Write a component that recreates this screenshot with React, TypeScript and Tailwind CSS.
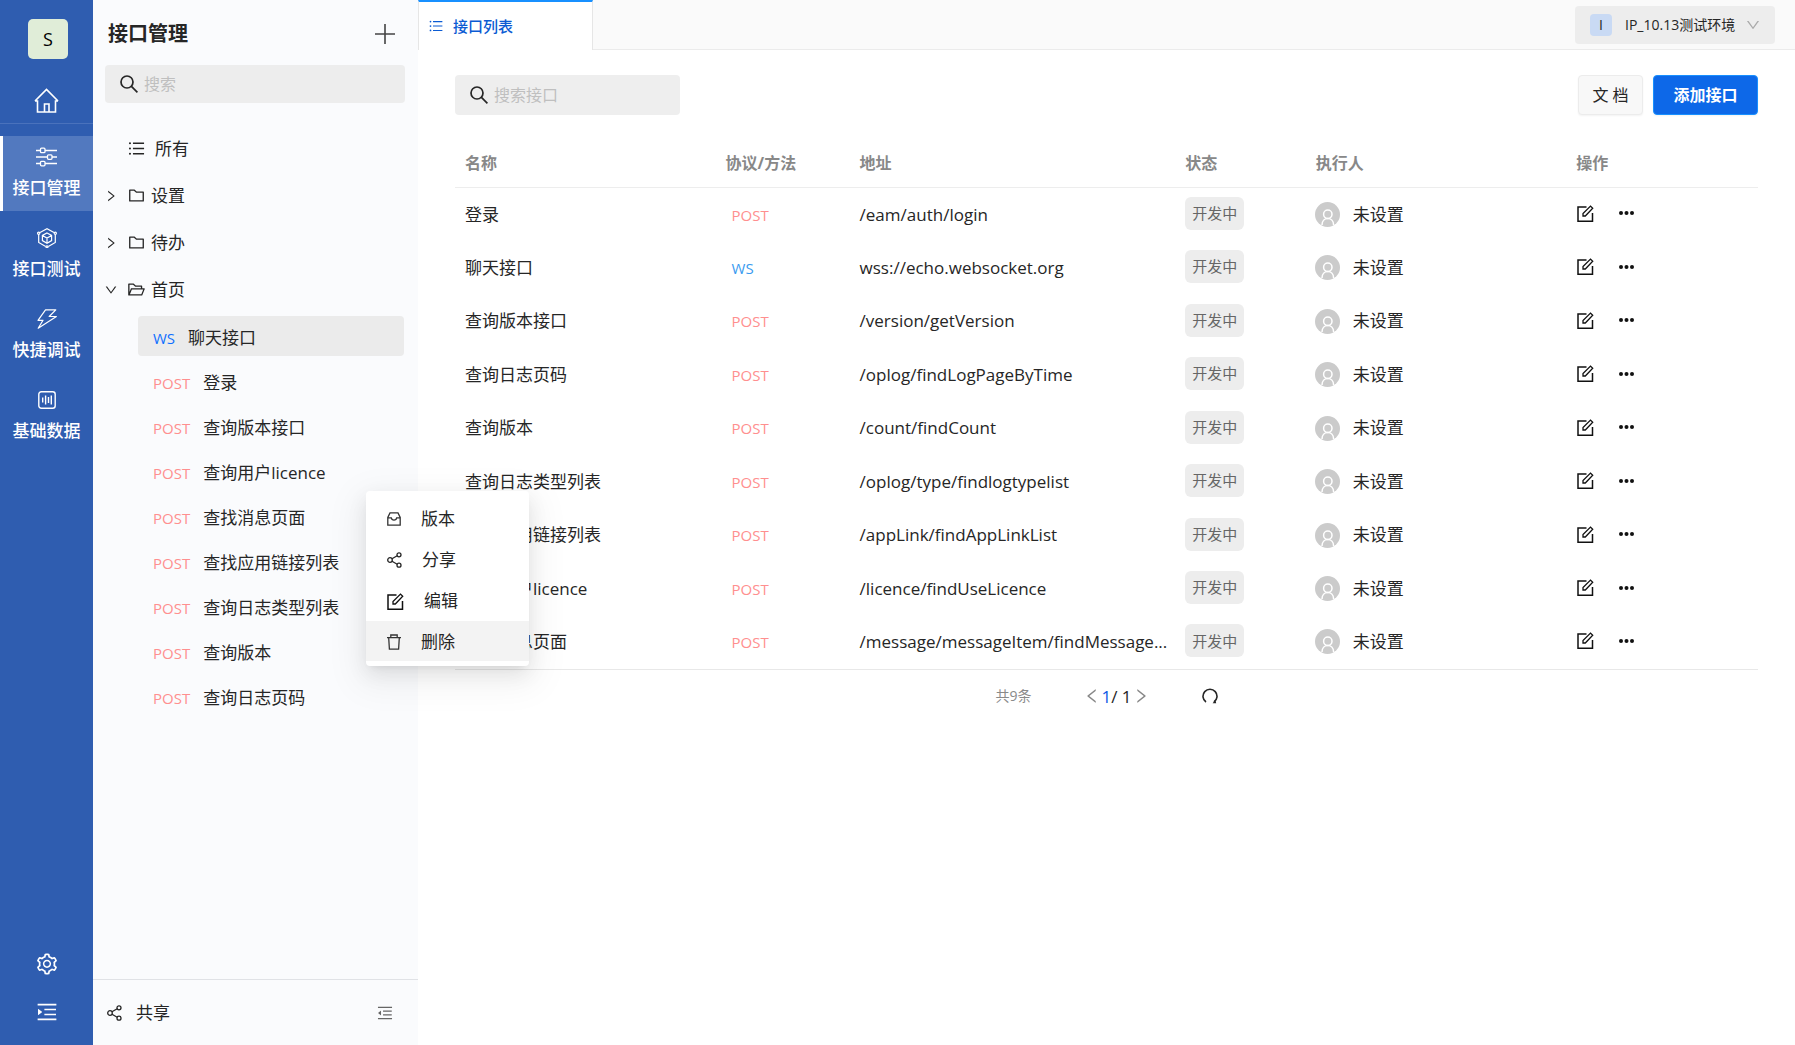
import type { ReactNode } from 'react';
import {
    AiOutlineDown,
    AiOutlineFolder,
    AiOutlineFolderOpen,
    AiOutlineLeft,
    AiOutlineMenuFold,
    AiOutlineMenuUnfold,
    AiOutlineRight,
    AiOutlineSetting,
    AiOutlineUnorderedList,
} from 'react-icons/ai';

type Method = 'POST' | 'WS';

const tree: { method: Method; name: string }[] = [
    { method: 'WS', name: '聊天接口' },
    { method: 'POST', name: '登录' },
    { method: 'POST', name: '查询版本接口' },
    { method: 'POST', name: '查询用户licence' },
    { method: 'POST', name: '查找消息页面' },
    { method: 'POST', name: '查找应用链接列表' },
    { method: 'POST', name: '查询日志类型列表' },
    { method: 'POST', name: '查询版本' },
    { method: 'POST', name: '查询日志页码' },
];

const rows: { name: string; method: Method; path: string }[] = [
    { name: '登录', method: 'POST', path: '/eam/auth/login' },
    { name: '聊天接口', method: 'WS', path: 'wss://echo.websocket.org' },
    { name: '查询版本接口', method: 'POST', path: '/version/getVersion' },
    { name: '查询日志页码', method: 'POST', path: '/oplog/findLogPageByTime' },
    { name: '查询版本', method: 'POST', path: '/count/findCount' },
    { name: '查询日志类型列表', method: 'POST', path: '/oplog/type/findlogtypelist' },
    { name: '查找应用链接列表', method: 'POST', path: '/appLink/findAppLinkList' },
    { name: '查询用户licence', method: 'POST', path: '/licence/findUseLicence' },
    { name: '查找消息页面', method: 'POST', path: '/message/messageItem/findMessage...' },
];

function HomeIcon() {
    return (
        <svg width="25" height="25" viewBox="0 0 25 25" fill="none" stroke="currentColor" strokeWidth="1.6">
            <path d="M1 13 12.5 1.5 24 13M1 13h2.5v11h18V13H24M10.5 24v-8h4.5v8" />
        </svg>
    );
}

function SlidersIcon() {
    return (
        <svg width="21" height="20" viewBox="0 0 21 20" fill="none" stroke="currentColor" strokeWidth="1.3">
            <path d="M0 3.5h4.5M9 3.5h12M0 10h11.5M16 10h5M0 16.5h4.5M9 16.5h12" />
            <rect x="4.5" y="1.2" width="4.5" height="4.5" rx="1" />
            <rect x="11.5" y="7.8" width="4.5" height="4.5" rx="1" />
            <rect x="4.5" y="14.3" width="4.5" height="4.5" rx="1" />
        </svg>
    );
}

function CubeIcon() {
    return (
        <svg width="20" height="20" viewBox="0 0 20 20" fill="none" stroke="currentColor" strokeWidth="1.2">
            <path d="M3 4.5 10 .8l7 3.7M1.7 6.8v7.6l7 4.2M18.3 6.8v7.6l-7 4.2" />
            <circle cx="1.7" cy="5.3" r="1.1" />
            <circle cx="18.3" cy="5.3" r="1.1" />
            <circle cx="10" cy="18.8" r="1" />
            <path d="m10 5 4.6 2.4v5.2L10 15.2l-4.6-2.6V7.4zM5.4 7.4 10 10l4.6-2.6M10 10v5.2" />
        </svg>
    );
}

function BoltIcon() {
    return (
        <svg width="20" height="20" viewBox="0 0 20 20" fill="none" stroke="currentColor" strokeWidth="1.2" strokeLinejoin="round">
            <path d="M8.5.8h10.3L12.2 7.5h7.2L1.2 19.2 6 11.3H1z" />
        </svg>
    );
}

function DataIcon() {
    return (
        <svg width="18" height="18" viewBox="0 0 18 18" fill="none" stroke="currentColor" strokeWidth="1.4">
            <rect x=".8" y=".8" width="16.4" height="16.4" rx="2.5" />
            <path d="M4.7 6.5v5M7.6 4.5v9M10.5 6v6M13.3 4.5v9" />
        </svg>
    );
}

function SearchIcon() {
    return (
        <svg className="shrink-0" width="18" height="18" viewBox="0 0 18 18" fill="none" stroke="#262626" strokeWidth="1.7">
            <circle cx="7" cy="7" r="6" />
            <path d="m11.2 11.2 6.2 6.2" />
        </svg>
    );
}

function PlusIcon() {
    return (
        <svg width="20" height="20" viewBox="0 0 20 20" stroke="#444" strokeWidth="1.6">
            <path d="M10 0v20M0 10h20" />
        </svg>
    );
}

function ShareIcon() {
    return (
        <svg width="15" height="16" viewBox="0 0 15 16" fill="none" stroke="currentColor" strokeWidth="1.3">
            <circle cx="3" cy="8" r="2.3" />
            <circle cx="12" cy="2.8" r="2" />
            <circle cx="12" cy="13.2" r="2" />
            <path d="m5 6.8 5.2-3M5 9.2l5.2 3" />
        </svg>
    );
}

function EditIcon() {
    return (
        <svg width="17" height="17" viewBox="0 0 17 17" fill="none" stroke="#111" strokeWidth="1.5">
            <path d="M9.5 2H1v14.2h14.5V8" />
            <path d="M6 11V8.6L13.5 1.1l2.2 2.2L8.3 11z" strokeWidth="1.3" />
        </svg>
    );
}

function VersionIcon() {
    return (
        <svg width="14" height="14" viewBox="0 0 14 14" fill="none" stroke="#333" strokeWidth="1.3">
            <path d="M3 .9h8l2.2 4.6v7.6H.8V5.5zM.8 5.9h3.5c.3 1.5 1.3 2.2 2.7 2.2s2.4-.7 2.7-2.2h3.5" />
        </svg>
    );
}

function TrashIcon() {
    return (
        <svg width="14" height="16" viewBox="0 0 14 16" fill="none" stroke="#333" strokeWidth="1.3">
            <path d="M0 3.7h14M3.800 3.500V1h6.400v2.500M1.700 3.800l.7 11.400h9.200l.7-11.400" />
        </svg>
    );
}

function ReloadIcon() {
    return (
        <svg width="16" height="16" viewBox="0 0 16 16" fill="none" stroke="#262626" strokeWidth="1.6">
            <path d="M4 14A7 7 0 1 1 12 14" />
            <path d="M10.600 15.200h3.600l-.9-3.200z" fill="#262626" stroke="none" />
        </svg>
    );
}

function UserAvatar() {
    return (
        <svg className="shrink-0" width="25" height="25" viewBox="0 0 25 25" fill="none">
            <circle cx="12.5" cy="12.5" r="12.5" fill="#cbcbcb" />
            <g stroke="#fff" strokeWidth="1.5">
                <circle cx="12.8" cy="12.3" r="4.2" />
                <path d="M7 23c0-4 2.6-6.5 5.8-6.5s5.8 2.500 5.800 6.500" />
            </g>
        </svg>
    );
}

function MethodLabel({ method, active }: { method: Method; active?: boolean }) {
    if (method === 'WS') {
        return <span className={active ? 'text-[15px] font-medium text-[#1070ff]' : 'text-[15px] font-medium text-[#3a9bf0]'}>WS</span>;
    }
    return <span className="text-[15px] text-[#ff8f8f]">POST</span>;
}

function RailItem({ icon, label, active }: { icon: ReactNode; label: string; active?: boolean }) {
    return (
        <button
            className={`flex h-[75px] w-full flex-col items-center justify-center gap-[9px] border-l-[3px] pr-[3px] ${
                active ? 'border-white bg-[#5279bf]' : 'border-transparent'
            }`}
        >
            <span className="flex h-5 items-center">{icon}</span>
            <span className="font-medium leading-6">{label}</span>
        </button>
    );
}

function Rail() {
    return (
        <nav className="flex w-[93px] shrink-0 flex-col items-center bg-[#2f5db0] text-[17px] text-white">
            <div className="flex w-full flex-col items-center border-b border-[#4a72bc] pt-[19px] pb-[10px]">
                <div className="ml-[3px] flex size-10 items-center justify-center rounded-[5px] bg-[#e0edd8] text-lg text-black">S</div>
                <button className="mt-[29px]" aria-label="首页">
                    <HomeIcon />
                </button>
            </div>
            <div className="mt-3 flex w-full flex-col gap-[6px]">
                <RailItem icon={<SlidersIcon />} label="接口管理" active />
                <RailItem icon={<CubeIcon />} label="接口测试" />
                <RailItem icon={<BoltIcon />} label="快捷调试" />
                <RailItem icon={<DataIcon />} label="基础数据" />
            </div>
            <div className="mt-auto flex flex-col items-center gap-6 pb-[21px]">
                <button aria-label="设置"><AiOutlineSetting size={24} /></button>
                <button aria-label="展开"><AiOutlineMenuUnfold size={24} /></button>
            </div>
        </nav>
    );
}

function Folder({ name, open }: { name: string; open?: boolean }) {
    return (
        <button className="flex h-[47px] w-full items-center pl-[11px]">
            {open ? <AiOutlineDown size={14} /> : <AiOutlineRight size={14} />}
            <span className="ml-[9px] flex w-[24px]">
                {open ? <AiOutlineFolderOpen size={19} /> : <AiOutlineFolder size={19} />}
            </span>
            {name}
        </button>
    );
}

function Sidebar() {
    return (
        <aside className="flex w-[325px] shrink-0 flex-col bg-[#fafbfd]">
            <div className="flex items-center justify-between pt-5 pr-[23px] pl-[15px]">
                <h1 className="text-xl leading-7 font-bold">接口管理</h1>
                <button aria-label="添加"><PlusIcon /></button>
            </div>
            <label className="mt-[17px] mr-[13px] ml-3 flex h-[38px] items-center gap-[6px] rounded bg-[#ededed] px-[15px]">
                <SearchIcon />
                <input aria-label="搜索" placeholder="搜索" className="w-full bg-transparent text-base outline-none placeholder:text-[#bfbfbf]" />
            </label>
            <div className="mt-[22px]">
                <button className="flex h-[47px] w-full items-center pl-[34px]">
                    <span className="flex w-[28px]"><AiOutlineUnorderedList size={19} /></span>
                    所有
                </button>
                <Folder name="设置" />
                <Folder name="待办" />
                <Folder name="首页" open />
                <ul className="mt-[3px] mr-[14px] ml-[45px] flex flex-col gap-[5px]">
                    {tree.map((item, i) => (
                        <li key={item.name}>
                            <button className={`flex h-10 w-full items-center gap-[13px] rounded-sm px-[15px] pt-1 ${i === 0 ? 'bg-[#ebebeb]' : ''}`}>
                                <MethodLabel method={item.method} active={i === 0} />
                                {item.name}
                            </button>
                        </li>
                    ))}
                </ul>
            </div>
            <div className="mt-auto flex h-[66px] items-center justify-between border-t border-[#e0e2e6] pr-6 pl-[14px]">
                <button className="flex items-center gap-[14px]">
                    <ShareIcon />
                    共享
                </button>
                <button className="text-[#666]" aria-label="收起"><AiOutlineMenuFold size={18} /></button>
            </div>
        </aside>
    );
}

function TopBar() {
    return (
        <header className="flex h-[50px] border-b border-[#ebebeb] bg-[#fafafa]">
            <button className="-mb-px flex w-[175px] items-center gap-[9px] border-x border-t-2 border-x-[#e6e6e6] border-t-[#1890ff] bg-white pl-[9px] text-[15px] font-medium text-[#0b5bd3]">
                <AiOutlineUnorderedList size={16} />
                接口列表
            </button>
            <label className="relative my-[6px] mr-5 ml-auto flex h-[38px] w-[200px] items-center gap-[13px] rounded bg-[#ededed] pl-[15px] text-sm">
                <span className="flex size-[22px] shrink-0 items-center justify-center rounded bg-[#c9daf4]">I</span>
                <select aria-label="环境" className="w-full appearance-none bg-transparent outline-none">
                    <option>IP_10.13测试环境</option>
                </select>
                <AiOutlineDown size={16} className="pointer-events-none absolute right-[14px] text-[#aaa]" />
            </label>
        </header>
    );
}

function ApiTable() {
    return (
        <table className="mt-6 w-full table-fixed border-b border-[#e8e8e8] text-left">
            <colgroup>
                <col className="w-1/5" />
                <col className="w-[134px]" />
                <col className="w-1/4" />
                <col className="w-1/10" />
                <col className="w-1/5" />
                <col />
            </colgroup>
            <thead className="border-b border-[#ededed] text-base text-[#888]">
                <tr className="h-[48px]">
                    <th className="px-[10px]">名称</th>
                    <th className="px-[10px]">协议/方法</th>
                    <th className="px-[10px]">地址</th>
                    <th className="px-[10px]">状态</th>
                    <th className="px-[10px]">执行人</th>
                    <th className="px-[10px]">操作</th>
                </tr>
            </thead>
            <tbody>
                {rows.map((row) => (
                    <tr key={row.path} className="odd:h-[54px] even:h-[53px]">
                        <td className="truncate px-[10px]">{row.name}</td>
                        <td className="px-4"><MethodLabel method={row.method} /></td>
                        <td className="px-[10px] whitespace-nowrap">{row.path}</td>
                        <td className="px-[10px] pb-[2px]">
                            <span className="inline-flex h-[33px] items-center rounded-md bg-[#ededed] px-[7px] align-middle text-[15px] text-[#666]">
                                开发中
                            </span>
                        </td>
                        <td className="px-[9px]">
                            <span className="flex items-center gap-[13px]">
                                <UserAvatar />
                                未设置
                            </span>
                        </td>
                        <td className="px-[11px] pb-[2px]">
                            <span className="flex items-center gap-[25px]">
                                <button aria-label="编辑"><EditIcon /></button>
                                <button aria-label="更多">
                                    <svg width="15" height="4" viewBox="0 0 15 4" fill="#111">
                                        <circle cx="2" cy="2" r="2" />
                                        <circle cx="7.500" cy="2" r="2" />
                                        <circle cx="13" cy="2" r="2" />
                                    </svg>
                                </button>
                            </span>
                        </td>
                    </tr>
                ))}
            </tbody>
        </table>
    );
}

function Pagination() {
    return (
        <div className="mt-[14px] flex items-center justify-center gap-[52px]">
            <span className="text-sm text-[#8a8a8a]">共9条</span>
            <div className="flex items-center">
                <button aria-label="上一页" className="text-[#888]"><AiOutlineLeft size={18} /></button>
                <span><span className="text-[#0b5be6]">1</span>/ 1</span>
                <button aria-label="下一页" className="text-[#888]"><AiOutlineRight size={18} /></button>
            </div>
            <button aria-label="刷新"><ReloadIcon /></button>
        </div>
    );
}

const menu = [
    { label: '版本', icon: <VersionIcon /> },
    { label: '分享', icon: <ShareIcon /> },
    { label: '编辑', icon: <EditIcon /> },
    { label: '删除', icon: <TrashIcon /> },
];

function ContextMenu() {
    return (
        <div
            className="absolute top-[491px] left-[366px] flex w-[163px] flex-col gap-px rounded-sm bg-white pt-[7px] pb-[5px]
                       shadow-[0_4px_8px_-5px_rgba(0,0,0,0.12),0_8px_20px_0_rgba(0,0,0,0.08),0_11px_35px_10px_rgba(0,0,0,0.05)]"
        >
            {menu.map((item) => (
                <button
                    key={item.label}
                    className={`flex h-10 items-center gap-5 pt-[2px] pl-[21px] ${item.label === '删除' ? 'bg-[#f3f3f3]' : ''}`}
                >
                    {item.icon}
                    {item.label}
                </button>
            ))}
        </div>
    );
}

export default function App() {
    return (
        <div className="relative flex h-screen bg-white font-['Open_Sans','Noto_Sans_CJK_SC',sans-serif] text-[17px] text-[#262626]">
            <Rail />
            <Sidebar />
            <main className="min-w-0 flex-1">
                <TopBar />
                <div className="px-[37px] pt-[25px]">
                    <div className="flex items-center gap-[10px]">
                        <label className="mr-auto flex h-10 w-[225px] items-center gap-[6px] rounded bg-[#eee] px-[15px]">
                            <SearchIcon />
                            <input aria-label="搜索接口" placeholder="搜索接口" className="w-full bg-transparent text-base outline-none placeholder:text-[#bfbfbf]" />
                        </label>
                        <button className="h-10 w-[65px] rounded border border-[#ececec] bg-[#f8f8f8] text-base shadow-xs">文 档</button>
                        <button className="h-10 w-[105px] rounded border border-[#1890ff] bg-[#0d68e8] text-base font-bold text-white shadow-xs">
                            添加接口
                        </button>
                    </div>
                    <ApiTable />
                    <Pagination />
                </div>
            </main>
            <ContextMenu />
        </div>
    );
}
